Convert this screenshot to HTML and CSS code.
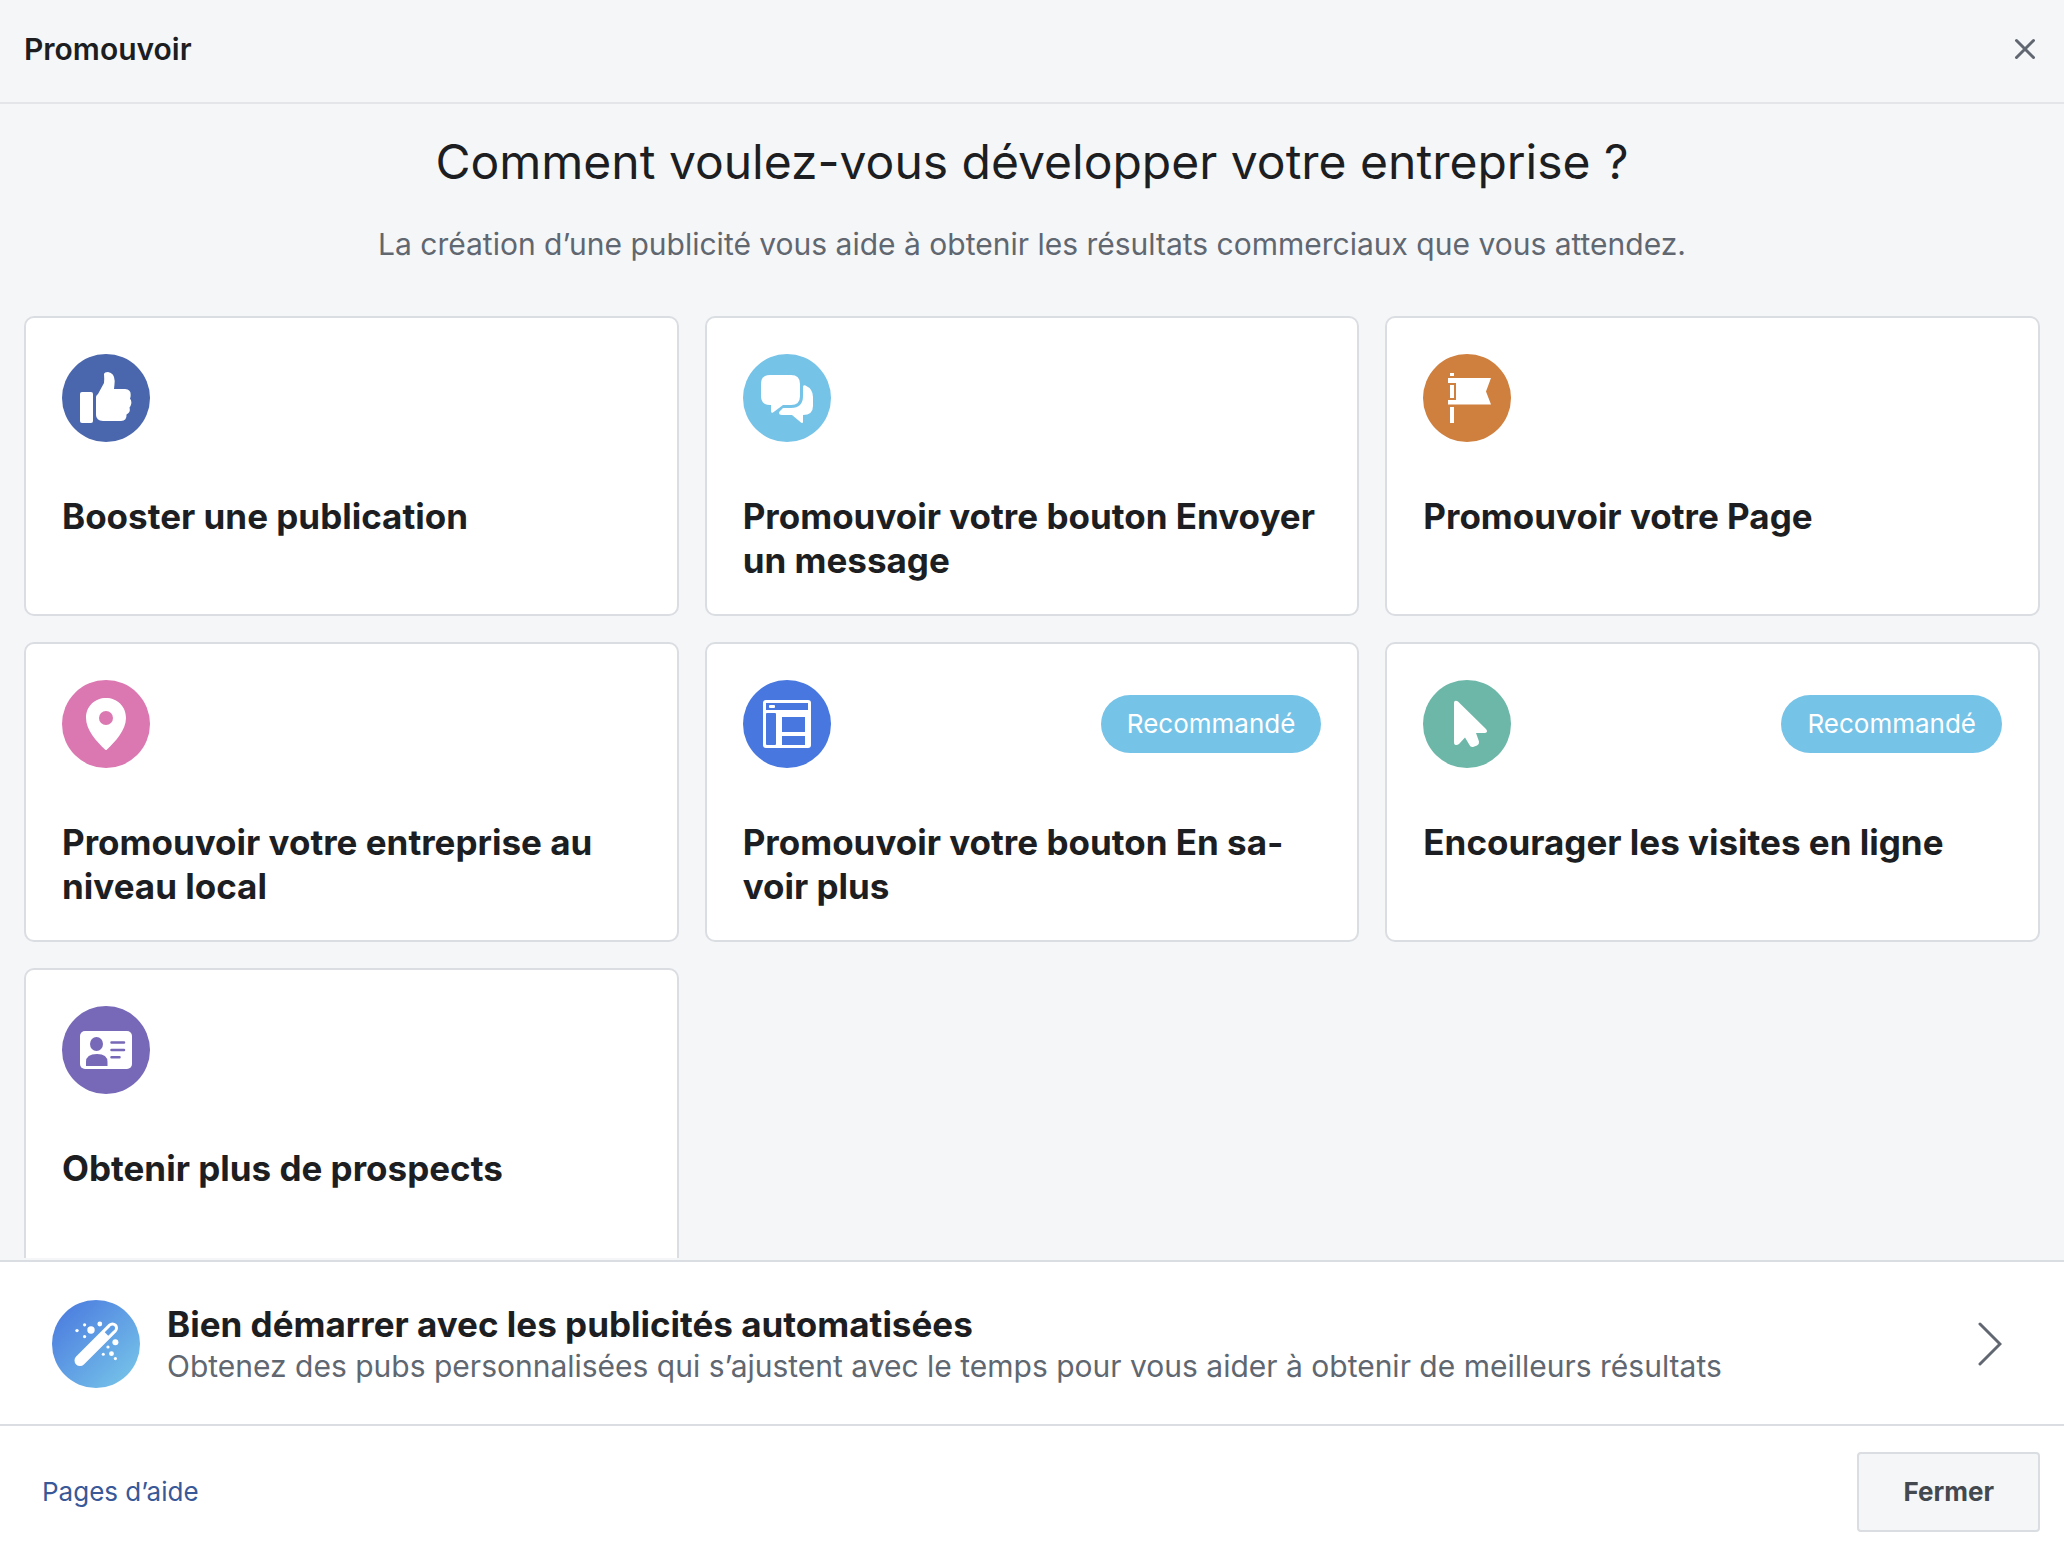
FILE: index.html
```html
<!DOCTYPE html>
<html lang="fr">
<head>
  <meta charset="UTF-8" />
  <meta name="viewport" content="width=device-width, initial-scale=1.0"/>
  <title>Promouvoir</title>
  <link rel="stylesheet" href="styles.css">
</head>
<body>

<header class="header">
  <h1>Promouvoir</h1>
  <button type="button" class="close" aria-label="Fermer la fenêtre">
    <svg viewBox="0 0 24 24"><path d="M3.500 3.500L20.500 20.500M20.500 3.500L3.500 20.500"/></svg>
  </button>
</header>

<main class="content">
  <h2>Comment voulez-vous développer votre entreprise ?</h2>
  <p class="subtitle">La création d’une publicité vous aide à obtenir les résultats commerciaux que vous attendez.</p>

  <div class="cards">
    <button type="button" class="card">
      <span class="card-top">
        <svg class="icon" viewBox="0 0 88 88">
          <circle cx="44" cy="44" r="44" fill="#4a67ad"/>
          <rect x="18" y="38" width="13" height="31" rx="2" fill="#fff"/>
          <path fill="#fff" d="M34 43Q34 41.500 36 40L42 29Q42.500 26 42 20Q42.500 18 46 18Q52.500 19 52.700 27Q52.500 31 52 35H63Q69 35.500 68.700 41Q68.700 43 68 44.500Q70.500 48 68.500 52Q67.800 53 67.500 53.500Q68.500 57 66.500 59Q65 60 64.500 60.500Q65 66.500 59 67H41Q34 66.500 34 61Z"/>
        </svg>
      </span>
      <span class="card-title">Booster une publication</span>
    </button>

    <button type="button" class="card">
      <span class="card-top">
        <svg class="icon" viewBox="0 0 88 88">
          <circle cx="44" cy="44" r="44" fill="#76c3e8"/>
          <path fill="#fff" d="M27 21H48Q57 21 57 30V42Q57 51 48 51H40L30 58.500Q28 59.500 28 57V51H27Q18 51 18 42V30Q18 21 27 21Z"/>
          <path fill="#fff" d="M60 33Q60 30.500 62.500 31.500Q70 35 70 43V52Q70 61 60 61V67.500Q60 70 58 68.500L49 61H39Q36 61 36 58.500Q36 58 37 57L40 54H48Q60 54 60 42Z"/>
        </svg>
      </span>
      <span class="card-title">Promouvoir votre bouton Envoyer un message</span>
    </button>

    <button type="button" class="card">
      <span class="card-top">
        <svg class="icon" viewBox="0 0 88 88">
          <circle cx="44" cy="44" r="44" fill="#cf7f3e"/>
          <path fill="#fff" d="M27 19H31V22H27ZM25 24H68L63 37.500L68 50.500H25V46H33V29H25ZM27 31H31V44H27ZM27 53H31V69H27Z"/>
        </svg>
      </span>
      <span class="card-title">Promouvoir votre Page</span>
    </button>

    <button type="button" class="card">
      <span class="card-top">
        <svg class="icon" viewBox="0 0 88 88">
          <circle cx="44" cy="44" r="44" fill="#db78b1"/>
          <path fill="#fff" d="M44 18C55 18 64 26 64 38C64 50 53 62 45 69.500Q44 70.500 43 69.500C35 62 24 50 24 38C24 26 33 18 44 18Z"/>
          <circle cx="44" cy="38" r="7" fill="#db78b1"/>
        </svg>
      </span>
      <span class="card-title">Promouvoir votre entreprise au niveau local</span>
    </button>

    <button type="button" class="card">
      <span class="card-top">
        <svg class="icon" viewBox="0 0 88 88">
          <circle cx="44" cy="44" r="44" fill="#4877df"/>
          <rect x="20" y="20" width="48" height="48" rx="3" fill="#fff"/>
          <path fill="#4877df" d="M23 23H65V30H23ZM24 33H32Q33 33 33 34V64Q33 65 32 65H24Q23 65 23 64V34Q23 33 24 33ZM39 37H62V52H39ZM39 56H62V65H39Z"/>
          <rect x="26" y="25" width="6" height="3" rx="1" fill="#fff"/>
        </svg>
        <span class="badge">Recommandé</span>
      </span>
      <span class="card-title">Promouvoir votre bouton En sa&shy;voir plus</span>
    </button>

    <button type="button" class="card">
      <span class="card-top">
        <svg class="icon" viewBox="0 0 88 88">
          <circle cx="44" cy="44" r="44" fill="#6db7a8"/>
          <path fill="#fff" d="M31 23Q31 20 34 21Q35 21.300 36 22.500L63 49Q65.500 52 62 53H53L56 61.500Q56.500 64 54 65.500L50 67Q47.500 67.500 46.500 65L42 57.500L36 64Q34 65.500 32 64.800Q31 64.500 31 62Z"/>
        </svg>
        <span class="badge">Recommandé</span>
      </span>
      <span class="card-title">Encourager les visites en ligne</span>
    </button>

    <button type="button" class="card">
      <span class="card-top">
        <svg class="icon" viewBox="0 0 88 88">
          <circle cx="44" cy="44" r="44" fill="#7768b8"/>
          <rect x="18" y="25" width="52" height="38" rx="5" fill="#fff"/>
          <ellipse cx="34.500" cy="38" rx="6.500" ry="7" fill="#7768b8"/>
          <path fill="#7768b8" d="M24 60V56Q24 48 35 48Q45.500 48 45.500 56V60Z"/>
          <path stroke="#7768b8" stroke-width="2.500" stroke-linecap="round" d="M49.500 36.500H62M49.500 44H62M49.500 51.300H57.500"/>
        </svg>
      </span>
      <span class="card-title">Obtenir plus de prospects</span>
    </button>
  </div>
</main>

<button type="button" class="banner">
  <svg class="icon" viewBox="0 0 88 88">
    <defs>
      <linearGradient id="wand-bg" x1="0.150" y1="0.150" x2="0.850" y2="0.850">
        <stop offset="0" stop-color="#4f82e0"/>
        <stop offset="1" stop-color="#72bde8"/>
      </linearGradient>
    </defs>
    <circle cx="44" cy="44" r="44" fill="url(#wand-bg)"/>
    <path stroke="#fff" stroke-width="11" stroke-linecap="round" d="M28 60.500L60.500 28"/>
    <path stroke="#5f9de4" stroke-width="5" d="M54.500 34L60.500 28"/>
    <circle cx="60.500" cy="28" r="2.500" fill="#5f9de4"/>
    <g fill="#fff">
      <circle cx="39" cy="30" r="3.700"/>
      <circle cx="32.600" cy="24.800" r="1.600"/>
      <circle cx="25" cy="30.600" r="1.700"/>
      <circle cx="32.600" cy="36.600" r="1.600"/>
      <circle cx="47.800" cy="24" r="2.400"/>
      <circle cx="63.400" cy="42.300" r="3"/>
      <circle cx="56" cy="47" r="1.600"/>
      <circle cx="51.300" cy="54.300" r="1.500"/>
      <circle cx="59.500" cy="53.700" r="2.400"/>
      <circle cx="63.400" cy="58.600" r="1.600"/>
    </g>
  </svg>
  <span class="banner-text">
    <span class="banner-title">Bien démarrer avec les publicités automatisées</span>
    <span class="banner-desc">Obtenez des pubs personnalisées qui s’ajustent avec le temps pour vous aider à obtenir de meilleurs résultats</span>
  </span>
  <svg class="chevron" viewBox="0 0 24 44"><path d="M2 2L22 22L2 42"/></svg>
</button>

<footer class="footer">
  <a href="#">Pages d’aide</a>
  <button type="button" class="btn">Fermer</button>
</footer>

</body>
</html>
```
FILE: styles.css
```css
* {
  margin: 0;
  padding: 0;
  box-sizing: border-box;
}
body {
  display: flex;
  flex-direction: column;
  height: 100vh;
  overflow: hidden;
  font-family: Inter, 'Liberation Sans', sans-serif;
  color: #1c1e21;
  background: #f5f6f8;
}
button {
  font-family: inherit;
  color: inherit;
  text-align: left;
  cursor: pointer;
}
svg {
  display: block;
  flex-shrink: 0;
  fill: none;
}

.header {
  display: flex;
  align-items: center;
  justify-content: space-between;
  padding: 28px 24px 32px;
  border-bottom: 2px solid #e4e5e8;
}
.header h1 {
  font-size: 30px;
  line-height: 42px;
  font-weight: 600;
}
.close {
  background: none;
  border: none;
  margin-right: 3px;
}
.close svg {
  width: 24px;
  height: 24px;
  stroke: #606770;
  stroke-width: 3;
  stroke-linecap: round;
}

.content {
  flex: 1;
  min-height: 0;
  overflow: hidden;
  padding: 26px 24px 0;
}
.content h2 {
  font-size: 48px;
  line-height: 64px;
  font-weight: 400;
  text-align: center;
}
.subtitle {
  margin: 30px 0 52px;
  font-size: 30px;
  line-height: 40px;
  text-align: center;
  color: #606770;
}
.cards {
  display: grid;
  grid-template-columns: repeat(3, 1fr);
  gap: 26px;
}
.card {
  display: flex;
  flex-direction: column;
  min-height: 300px;
  padding: 36px 36px 32px;
  background: #fff;
  border: 2px solid #dadde1;
  border-radius: 10px;
}
.card-top {
  display: flex;
  align-items: center;
  justify-content: space-between;
  width: 100%;
  margin-bottom: 52px;
}
.icon {
  width: 88px;
  height: 88px;
}
.badge {
  padding: 0 26px;
  font-size: 26px;
  line-height: 58px;
  color: #fff;
  background: #76c3e8;
  border-radius: 29px;
}
.card-title {
  font-size: 35px;
  line-height: 44px;
  font-weight: 700;
}

.banner {
  display: flex;
  align-items: center;
  gap: 27px;
  margin-top: 2px;
  padding: 38px 62px 36px 52px;
  background: #fff;
  border: none;
  border-top: 2px solid #dadde1;
  border-bottom: 2px solid #dadde1;
}
.banner-text {
  flex: 1;
}
.banner-title, .banner-desc {
  display: block;
}
.banner-title {
  font-size: 35px;
  line-height: 44px;
  font-weight: 700;
}
.banner-desc {
  font-size: 30px;
  line-height: 40px;
  color: #606770;
}
.chevron {
  width: 24px;
  height: 44px;
  stroke: #606770;
  stroke-width: 3;
  stroke-linecap: round;
}

.footer {
  display: flex;
  align-items: center;
  justify-content: space-between;
  padding: 26px 24px 24px 42px;
  background: #fff;
}
.footer a {
  font-size: 26px;
  line-height: 36px;
  color: #385898;
  text-decoration: none;
}
.footer a:hover {
  text-decoration: underline;
}
.btn {
  padding: 0 44px;
  font-size: 26px;
  line-height: 76px;
  font-weight: 700;
  color: #444950;
  background: #f5f6f7;
  border: 2px solid #dadde1;
  border-radius: 4px;
}
```
